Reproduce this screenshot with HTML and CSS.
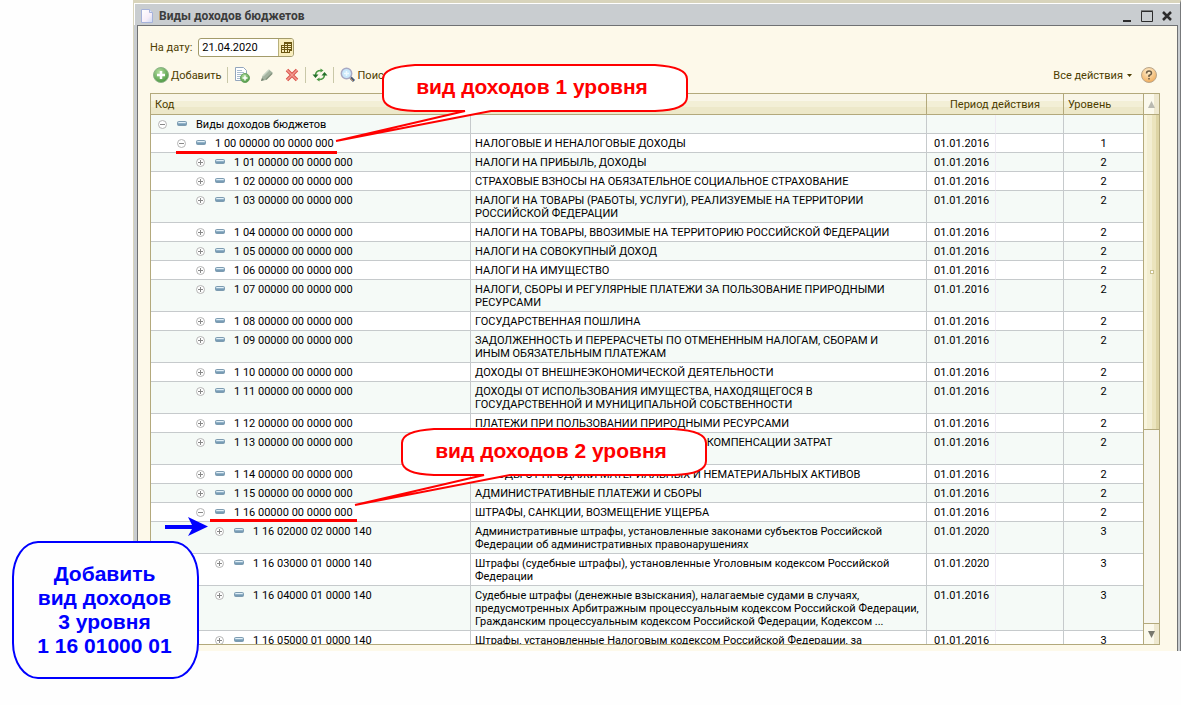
FILE: index.html
```html
<!DOCTYPE html>
<html lang="ru">
<head>
<meta charset="utf-8">
<title>Виды доходов бюджетов</title>
<link rel="stylesheet" href="styles.css">
</head>
<body>
<svg class="defs" aria-hidden="true">
  <defs>
    <linearGradient id="g-bar" x1="0" y1="0" x2="0" y2="1"><stop offset="0" stop-color="#c4dcea"/><stop offset="1" stop-color="#5d86a3"/></linearGradient>
    <radialGradient id="g-green" cx=".4" cy=".3" r=".8"><stop offset="0" stop-color="#b5dfa0"/><stop offset="1" stop-color="#3f8f35"/></radialGradient>
    <radialGradient id="g-orange" cx=".45" cy=".3" r=".8"><stop offset="0" stop-color="#fff0d0"/><stop offset="1" stop-color="#eda24a"/></radialGradient>
    <linearGradient id="g-page" x1="0" y1="0" x2="1" y2="1"><stop offset="0" stop-color="#fff"/><stop offset=".6" stop-color="#f7eef8"/><stop offset="1" stop-color="#c9d8f4"/></linearGradient>
  </defs>
  <symbol id="minus" viewBox="0 0 9 9"><circle cx="4.5" cy="4.5" r="4" fill="#fff" stroke="#b4b4b4"/><path d="M2 4.5h5" stroke="#888"/></symbol>
  <symbol id="plus" viewBox="0 0 9 9"><circle cx="4.5" cy="4.5" r="4" fill="#fff" stroke="#b4b4b4"/><path d="M2 4.5h5M4.500 2v5" stroke="#888"/></symbol>
  <symbol id="item" viewBox="0 0 10 5"><rect x=".5" y=".5" width="9" height="4" rx="1" fill="url(#g-bar)" stroke="#7d9bb0"/><path d="M1.500 1.500h7" stroke="#e2f0f8"/></symbol>
</svg>

<main class="window">
  <header class="titlebar">
    <svg class="page-icon" viewBox="0 0 12 14"><path d="M.5.5h8l3 3v10H.5z" fill="url(#g-page)" stroke="#a5b2da"/><path d="M8.500.5v3h3" fill="#dfe6fa" stroke="#a5b2da"/></svg>
    <h1 class="title">Виды доходов бюджетов</h1>
    <button class="win-btn" aria-label="Свернуть"><svg viewBox="0 0 12 12"><path d="M2 11h8" stroke="#2c2c2c" stroke-width="2"/></svg></button>
    <button class="win-btn" aria-label="Развернуть"><svg viewBox="0 0 12 12"><path d="M.5 1.500h11v10H.5zM0 1h12" fill="none" stroke="#2c2c2c"/></svg></button>
    <button class="win-btn" aria-label="Закрыть"><svg viewBox="0 0 12 12"><path d="M2 2l8 8M10 2l-8 8" stroke="#2c2c2c" stroke-width="2.500"/></svg></button>
  </header>
  <div class="content">
    <div class="date-row">
      <label for="date">На дату:</label>
      <div class="date-field">
        <input id="date" type="text" value="21.04.2020">
        <button class="date-pick" aria-label="Выбрать дату"><svg viewBox="0 0 11 11"><path d="M3 0h8v9H9v2H0V3h3z" fill="#6b5611"/><path d="M4 2h2v1H4zM7 2h3v1H7zM4 4h2v1H4zM7 4h3v1H7zM4 6h2v1H4zM7 6h3v1H7zM1 4h2v1H1zM1 6h2v1H1zM1 8h2v2H1zM4 8h2v2H4zM7 8h1v2H7z" fill="#f8edbc"/></svg></button>
      </div>
    </div>
    <div class="toolbar">
      <button class="tool tool-add"><svg class="i16" viewBox="0 0 16 16"><circle cx="8" cy="8" r="7.500" fill="url(#g-green)" stroke="#8db288"/><path d="M8 4v8M4 8h8" stroke="#fff" stroke-width="2.500"/></svg>Добавить</button>
      <span class="sep"></span>
      <button class="tool" aria-label="Скопировать"><svg class="i16" viewBox="0 0 16 16"><path d="M1.500.5h8l3 3v10h-11z" fill="#fff" stroke="#93a6bd"/><path d="M3 3.500h5M3 5.500h7M3 7.500h7M3 9.500h4M3 11.500h4" stroke="#a9bccf"/><circle cx="11" cy="11" r="4.500" fill="url(#g-green)" stroke="#6ba563"/><path d="M11 8.500v5M8.500 11h5" stroke="#fff" stroke-width="1.500"/></svg></button>
      <button class="tool" aria-label="Изменить"><svg class="i16" viewBox="0 0 16 16"><path d="M2 14l1.500-5L10 2.500 14 6l-7 7z" fill="#a3b29f"/><path d="M4 9l6-6" stroke="#c8d4c4" stroke-width="1.500"/><path d="M7 12.500L13 6.500" stroke="#84937f" stroke-width="1.500"/><path d="M2 14l1-3 2 2z" fill="#74806f"/></svg></button>
      <button class="tool" aria-label="Удалить"><svg class="i16" viewBox="0 0 16 16"><path d="M3 3l10 10M13 3L3 13" stroke="#d9534a" stroke-width="3.500"/><path d="M3 3l10 10M13 3L3 13" stroke="#f39a90" stroke-width="1.500"/></svg></button>
      <span class="sep"></span>
      <button class="tool" aria-label="Обновить"><svg class="i16" viewBox="0 0 16 16"><path d="M3.500 8.500Q3.500 3.500 9 3.500M12.500 7.500q0 5-5.500 5" fill="none" stroke="#4d9a45" stroke-width="1.500"/><path d="M.5 7.500h6l-3 3.500zM9.500 8.500h6l-3-3.500z" fill="#23702a"/><path d="M8.500 1.500l3 2-3 2zM7.500 10.500l-3 2 3 2z" fill="#4d9a45"/></svg></button>
      <span class="sep"></span>
      <button class="tool tool-find"><svg class="i16" viewBox="0 0 16 16"><path d="M10.500 10.500l3.500 3.500" stroke="#4a5d78" stroke-width="3"/><path d="M10 11l3 3" stroke="#c58f6a"/><circle cx="6.500" cy="6.500" r="5.200" fill="#c9e8fb" stroke="#a8a9c4" stroke-width="1.500"/><path d="M4 6.500h5M6.500 4v5" stroke="#eefaff" stroke-width="1.500"/></svg>Поиск</button>
      <button class="tool tool-all">Все действия<svg class="caret" viewBox="0 0 5 3"><path d="M0 0h5L2.500 3z" fill="#4d3d00"/></svg></button>
      <button class="tool tool-help" aria-label="Справка"><svg class="i16" viewBox="0 0 16 16"><circle cx="8" cy="8" r="7.500" fill="url(#g-orange)" stroke="#b9a68c"/><path d="M5.500 6.500Q5.500 4 8 4t2.500 2.200Q10.500 7.500 8 8.500v1.500M8 11v1.500" fill="none" stroke="#6b5a42" stroke-width="1.500"/></svg></button>
    </div>
    <div class="grid">
      <div class="viewport">
        <table class="table">
          <colgroup><col class="c-code"><col><col class="c-from"><col class="c-to"><col class="c-level"></colgroup>
          <thead><tr><th>Код</th><th></th><th colspan="2" class="center">Период действия</th><th>Уровень</th></tr></thead>
          <tbody>
            <tr><td><div class="node l0"><svg class="tg"><use href="#minus"/></svg><svg class="it"><use href="#item"/></svg>Виды доходов бюджетов</div></td><td></td><td></td><td></td><td></td></tr>
            <tr><td><div class="node l1"><svg class="tg"><use href="#minus"/></svg><svg class="it"><use href="#item"/></svg>1 00 00000 00 0000 000</div></td><td>НАЛОГОВЫЕ И НЕНАЛОГОВЫЕ ДОХОДЫ</td><td>01.01.2016</td><td></td><td>1</td></tr>
            <tr><td><div class="node l2"><svg class="tg"><use href="#plus"/></svg><svg class="it"><use href="#item"/></svg>1 01 00000 00 0000 000</div></td><td>НАЛОГИ НА ПРИБЫЛЬ, ДОХОДЫ</td><td>01.01.2016</td><td></td><td>2</td></tr>
            <tr><td><div class="node l2"><svg class="tg"><use href="#plus"/></svg><svg class="it"><use href="#item"/></svg>1 02 00000 00 0000 000</div></td><td>СТРАХОВЫЕ ВЗНОСЫ НА ОБЯЗАТЕЛЬНОЕ СОЦИАЛЬНОЕ СТРАХОВАНИЕ</td><td>01.01.2016</td><td></td><td>2</td></tr>
            <tr><td><div class="node l2"><svg class="tg"><use href="#plus"/></svg><svg class="it"><use href="#item"/></svg>1 03 00000 00 0000 000</div></td><td>НАЛОГИ НА ТОВАРЫ (РАБОТЫ, УСЛУГИ), РЕАЛИЗУЕМЫЕ НА ТЕРРИТОРИИ<br>РОССИЙСКОЙ ФЕДЕРАЦИИ</td><td>01.01.2016</td><td></td><td>2</td></tr>
            <tr><td><div class="node l2"><svg class="tg"><use href="#plus"/></svg><svg class="it"><use href="#item"/></svg>1 04 00000 00 0000 000</div></td><td>НАЛОГИ НА ТОВАРЫ, ВВОЗИМЫЕ НА ТЕРРИТОРИЮ РОССИЙСКОЙ ФЕДЕРАЦИИ</td><td>01.01.2016</td><td></td><td>2</td></tr>
            <tr><td><div class="node l2"><svg class="tg"><use href="#plus"/></svg><svg class="it"><use href="#item"/></svg>1 05 00000 00 0000 000</div></td><td>НАЛОГИ НА СОВОКУПНЫЙ ДОХОД</td><td>01.01.2016</td><td></td><td>2</td></tr>
            <tr><td><div class="node l2"><svg class="tg"><use href="#plus"/></svg><svg class="it"><use href="#item"/></svg>1 06 00000 00 0000 000</div></td><td>НАЛОГИ НА ИМУЩЕСТВО</td><td>01.01.2016</td><td></td><td>2</td></tr>
            <tr><td><div class="node l2"><svg class="tg"><use href="#plus"/></svg><svg class="it"><use href="#item"/></svg>1 07 00000 00 0000 000</div></td><td>НАЛОГИ, СБОРЫ И РЕГУЛЯРНЫЕ ПЛАТЕЖИ ЗА ПОЛЬЗОВАНИЕ ПРИРОДНЫМИ<br>РЕСУРСАМИ</td><td>01.01.2016</td><td></td><td>2</td></tr>
            <tr><td><div class="node l2"><svg class="tg"><use href="#plus"/></svg><svg class="it"><use href="#item"/></svg>1 08 00000 00 0000 000</div></td><td>ГОСУДАРСТВЕННАЯ ПОШЛИНА</td><td>01.01.2016</td><td></td><td>2</td></tr>
            <tr><td><div class="node l2"><svg class="tg"><use href="#plus"/></svg><svg class="it"><use href="#item"/></svg>1 09 00000 00 0000 000</div></td><td>ЗАДОЛЖЕННОСТЬ И ПЕРЕРАСЧЕТЫ ПО ОТМЕНЕННЫМ НАЛОГАМ, СБОРАМ И<br>ИНЫМ ОБЯЗАТЕЛЬНЫМ ПЛАТЕЖАМ</td><td>01.01.2016</td><td></td><td>2</td></tr>
            <tr><td><div class="node l2"><svg class="tg"><use href="#plus"/></svg><svg class="it"><use href="#item"/></svg>1 10 00000 00 0000 000</div></td><td>ДОХОДЫ ОТ ВНЕШНЕЭКОНОМИЧЕСКОЙ ДЕЯТЕЛЬНОСТИ</td><td>01.01.2016</td><td></td><td>2</td></tr>
            <tr><td><div class="node l2"><svg class="tg"><use href="#plus"/></svg><svg class="it"><use href="#item"/></svg>1 11 00000 00 0000 000</div></td><td>ДОХОДЫ ОТ ИСПОЛЬЗОВАНИЯ ИМУЩЕСТВА, НАХОДЯЩЕГОСЯ В<br>ГОСУДАРСТВЕННОЙ И МУНИЦИПАЛЬНОЙ СОБСТВЕННОСТИ</td><td>01.01.2016</td><td></td><td>2</td></tr>
            <tr><td><div class="node l2"><svg class="tg"><use href="#plus"/></svg><svg class="it"><use href="#item"/></svg>1 12 00000 00 0000 000</div></td><td>ПЛАТЕЖИ ПРИ ПОЛЬЗОВАНИИ ПРИРОДНЫМИ РЕСУРСАМИ</td><td>01.01.2016</td><td></td><td>2</td></tr>
            <tr><td><div class="node l2"><svg class="tg"><use href="#plus"/></svg><svg class="it"><use href="#item"/></svg>1 13 00000 00 0000 000</div></td><td>ДОХОДЫ ОТ ОКАЗАНИЯ ПЛАТНЫХ УСЛУГ И КОМПЕНСАЦИИ ЗАТРАТ<br>ГОСУДАРСТВА</td><td>01.01.2016</td><td></td><td>2</td></tr>
            <tr><td><div class="node l2"><svg class="tg"><use href="#plus"/></svg><svg class="it"><use href="#item"/></svg>1 14 00000 00 0000 000</div></td><td>ДОХОДЫ ОТ ПРОДАЖИ МАТЕРИАЛЬНЫХ И НЕМАТЕРИАЛЬНЫХ АКТИВОВ</td><td>01.01.2016</td><td></td><td>2</td></tr>
            <tr><td><div class="node l2"><svg class="tg"><use href="#plus"/></svg><svg class="it"><use href="#item"/></svg>1 15 00000 00 0000 000</div></td><td>АДМИНИСТРАТИВНЫЕ ПЛАТЕЖИ И СБОРЫ</td><td>01.01.2016</td><td></td><td>2</td></tr>
            <tr><td><div class="node l2"><svg class="tg"><use href="#minus"/></svg><svg class="it"><use href="#item"/></svg>1 16 00000 00 0000 000</div></td><td>ШТРАФЫ, САНКЦИИ, ВОЗМЕЩЕНИЕ УЩЕРБА</td><td>01.01.2016</td><td></td><td>2</td></tr>
            <tr><td><div class="node l3"><svg class="tg"><use href="#plus"/></svg><svg class="it"><use href="#item"/></svg>1 16 02000 02 0000 140</div></td><td>Административные штрафы, установленные законами субъектов Российской<br>Федерации об административных правонарушениях</td><td>01.01.2020</td><td></td><td>3</td></tr>
            <tr><td><div class="node l3"><svg class="tg"><use href="#plus"/></svg><svg class="it"><use href="#item"/></svg>1 16 03000 01 0000 140</div></td><td>Штрафы (судебные штрафы), установленные Уголовным кодексом Российской<br>Федерации</td><td>01.01.2020</td><td></td><td>3</td></tr>
            <tr><td><div class="node l3"><svg class="tg"><use href="#plus"/></svg><svg class="it"><use href="#item"/></svg>1 16 04000 01 0000 140</div></td><td>Судебные штрафы (денежные взыскания), налагаемые судами в случаях,<br>предусмотренных Арбитражным процессуальным кодексом Российской Федерации,<br>Гражданским процессуальным кодексом Российской Федерации, Кодексом ...</td><td>01.01.2016</td><td></td><td>3</td></tr>
            <tr><td><div class="node l3"><svg class="tg"><use href="#plus"/></svg><svg class="it"><use href="#item"/></svg>1 16 05000 01 0000 140</div></td><td>Штрафы, установленные Налоговым кодексом Российской Федерации, за</td><td>01.01.2016</td><td></td><td>3</td></tr>
          </tbody>
        </table>
      </div>
      <div class="scrollbar">
        <button class="sb-btn sb-up" aria-label="Вверх"><svg viewBox="0 0 7 7"><path d="M3.500 0L7 7H0z" fill="#b9b9b0"/></svg></button>
        <div class="track"><div class="thumb"><span class="grip"></span></div></div>
        <button class="sb-btn sb-down" aria-label="Вниз"><svg viewBox="0 0 7 7"><path d="M0 0h7L3.500 7z" fill="#77776c"/></svg></button>
      </div>
    </div>
  </div>
</main>

<div class="underline underline-1"></div>
<div class="underline underline-2"></div>

<div class="callout callout-1">
  <svg class="bubble" viewBox="0 0 354 80"><path d="M80 2H320Q352 4 352 16V34Q352 47 320 48H156L1 78L130 48H80Q48 47 48 34V16Q48 4 80 2z" fill="#fff" stroke="#f00" stroke-width="2"/></svg>
  <p class="callout-text">вид доходов 1 уровня</p>
</div>
<div class="callout callout-2">
  <svg class="bubble" viewBox="0 0 354 80"><path d="M80 2H320Q352 4 352 16V34Q352 47 320 48H156L1 78L130 48H80Q48 47 48 34V16Q48 4 80 2z" fill="#fff" stroke="#f00" stroke-width="2"/></svg>
  <p class="callout-text">вид доходов 2 уровня</p>
</div>

<svg class="arrow" viewBox="0 0 43 19"><path d="M0 8h27L23 0l20 9.500L23 19l4-7H0z" fill="#00f"/></svg>
<p class="note">Добавить<br>вид доходов<br>3 уровня<br>1 16 01000 01</p>
</body>
</html>
```
FILE: styles.css
```css
* { box-sizing: border-box; }

body {
  margin: 0;
  position: relative;
  min-height: 100vh;
  background: #fefefe;
  color: #000;
  font: 11px/13px Roboto, "Liberation Sans", sans-serif;
}

button, input {
  font: inherit;
  color: inherit;
  margin: 0;
  padding: 0;
  border: 0;
  background: none;
}

svg { display: block; }
.defs { position: absolute; width: 0; height: 0; }

/* Window frame */
.window {
  display: flex;
  flex-direction: column;
  height: calc(100vh - 54px);
  margin-left: 133px;
  border-top: 3px solid #d8d4bc;
  border-left: 1px solid #d8d4bc;
  border-right: 1px solid #77797b;
  background: #c9cdd0;
}

.titlebar {
  display: flex;
  align-items: center;
  height: 22px;
  padding: 3px 7px 0 6px;
  border-top: 1px solid #fff;
  border-left: 1px solid #fff;
}

.page-icon { width: 12px; height: 14px; }

.title {
  flex: 1;
  margin: 0 0 0 6px;
  color: #3c3c3c;
  font-size: 12px;
  font-weight: 700;
}

.win-btn { width: 12px; margin-left: 8px; }
.win-btn svg { width: 12px; height: 12px; }

.content {
  flex: 1;
  min-height: 0;
  display: flex;
  flex-direction: column;
  margin: 0 2px 0 3px;
  padding: 12px 17px 6px 12px;
  border: 1px solid #6f7173;
  border-bottom: 0;
  background: #fdf9ea;
  color: #4d3d00;
}

/* Date and command bar */
.date-row { display: flex; align-items: center; gap: 6px; }

.date-field {
  display: flex;
  width: 96px;
  height: 19px;
  border: 1px solid #a39b6a;
  border-radius: 3px;
  background: #fff;
  overflow: hidden;
}

.date-field input { flex: 1; min-width: 0; padding-left: 3px; color: #000; }

.date-pick {
  display: grid;
  place-items: center;
  width: 15px;
  border-left: 1px solid #b8b07c;
  background: #f8edbc;
}
.date-pick svg { width: 11px; height: 11px; }

.toolbar { display: flex; align-items: center; height: 22px; margin: 7px 0; padding: 0 3px; }
.tool { display: flex; align-items: center; flex: none; white-space: nowrap; }
.tool + .tool { margin-left: 9px; }
.tool-add, .tool-find { gap: 2px; }
.i16 { width: 16px; height: 16px; }
.sep { width: 1px; height: 16px; margin: 0 6px 0 5px; background: #c9c8a8; }
.toolbar .tool-all { gap: 4px; margin-left: auto; }
.caret { width: 5px; height: 3px; }

/* Tree grid */
.grid { flex: 1; min-height: 0; display: flex; border: 1px solid #b3a97c; background: #fff; }
.viewport { flex: 1; min-width: 0; overflow: hidden; }

.table { width: 100%; table-layout: fixed; border-collapse: separate; border-spacing: 0; }
.c-code { width: 320px; }
.c-from { width: 69px; }
.c-to { width: 68px; }
.c-level { width: 79px; }

th {
  height: 21px;
  padding: 0 4px;
  border-right: 1px solid #b3a97c;
  border-bottom: 1px solid #b3a97c;
  background: linear-gradient(#f9f6e8 0 35%, #f3efd6 35% 65%, #ede8c9 65%);
  color: #4d3d00;
  font-weight: 400;
  text-align: left;
}
th:last-child, td:last-child { border-right: 0; }
th.center { text-align: center; }

td {
  padding: 3px 0 2px 4px;
  border-right: 1px solid #c6cacc;
  border-bottom: 1px solid #c6cacc;
  color: #000;
  vertical-align: top;
  white-space: nowrap;
}
td:nth-child(3) { padding-left: 7px; border-right-color: #f0ebf4; }
td:nth-child(5) { padding-left: 0; text-align: center; }
tbody tr { height: 19px; }
tbody tr:nth-child(odd) { background: #f5faf7; }

.node { display: flex; align-items: center; }
.tg { width: 9px; height: 9px; margin-right: 10px; }
.it { width: 10px; height: 5px; margin: 0 9px 2px 0; }
.l0 { padding-left: 3px; }
.l1 { padding-left: 22px; }
.l2 { padding-left: 41px; }
.l3 { padding-left: 60px; }

.scrollbar { display: flex; flex-direction: column; width: 16px; border-left: 1px solid #b3a97c; background: #f7f6ee; }
.sb-btn { display: grid; place-items: center; height: 21px; background: linear-gradient(90deg, #fbf9ec 0 70%, #eee8cf 70%); }
.sb-btn svg { width: 7px; height: 7px; }
.sb-up { border-bottom: 1px solid #b3a97c; }
.sb-down { border-top: 1px solid #b3a97c; }
.track { flex: 1; }
.thumb {
  display: grid;
  place-items: center;
  height: 62%;
  border-bottom: 1px solid #b3a97c;
  background: linear-gradient(90deg, #f9f5de 0 20%, #f3eed2 20% 55%, #ebe4bd 55% 80%, #ddd4a4 80%);
}
.grip { width: 4px; height: 4px; border: 1px solid #c9c08f; background: #fff; }

/* Annotations drawn over the window */
.underline { position: absolute; height: 3px; background: #f00; }
.underline-1 { left: 176px; top: 151px; width: 161px; }
.underline-2 { left: 210px; top: 519px; width: 147px; }

.callout { position: absolute; width: 354px; height: 80px; }
.callout-1 { left: 335px; top: 63px; }
.callout-2 { left: 354px; top: 427px; }
.bubble { width: 354px; height: 80px; }
.callout-text {
  position: absolute;
  top: 12px;
  left: 46px;
  right: 6px;
  margin: 0;
  color: #f00;
  font: 700 21px/24px "Liberation Sans", Arial, sans-serif;
  text-align: center;
}

.arrow { position: absolute; left: 165px; top: 517px; width: 43px; height: 19px; }

.note {
  position: absolute;
  left: 12px;
  top: 541px;
  width: 187px;
  margin: 0;
  padding: 19px 2px 19px 0;
  border: 2px solid #00f;
  border-radius: 26px / 36px;
  background: #fefefe;
  color: #00f;
  font: 700 21px/24px "Liberation Sans", Arial, sans-serif;
  text-align: center;
}
```
